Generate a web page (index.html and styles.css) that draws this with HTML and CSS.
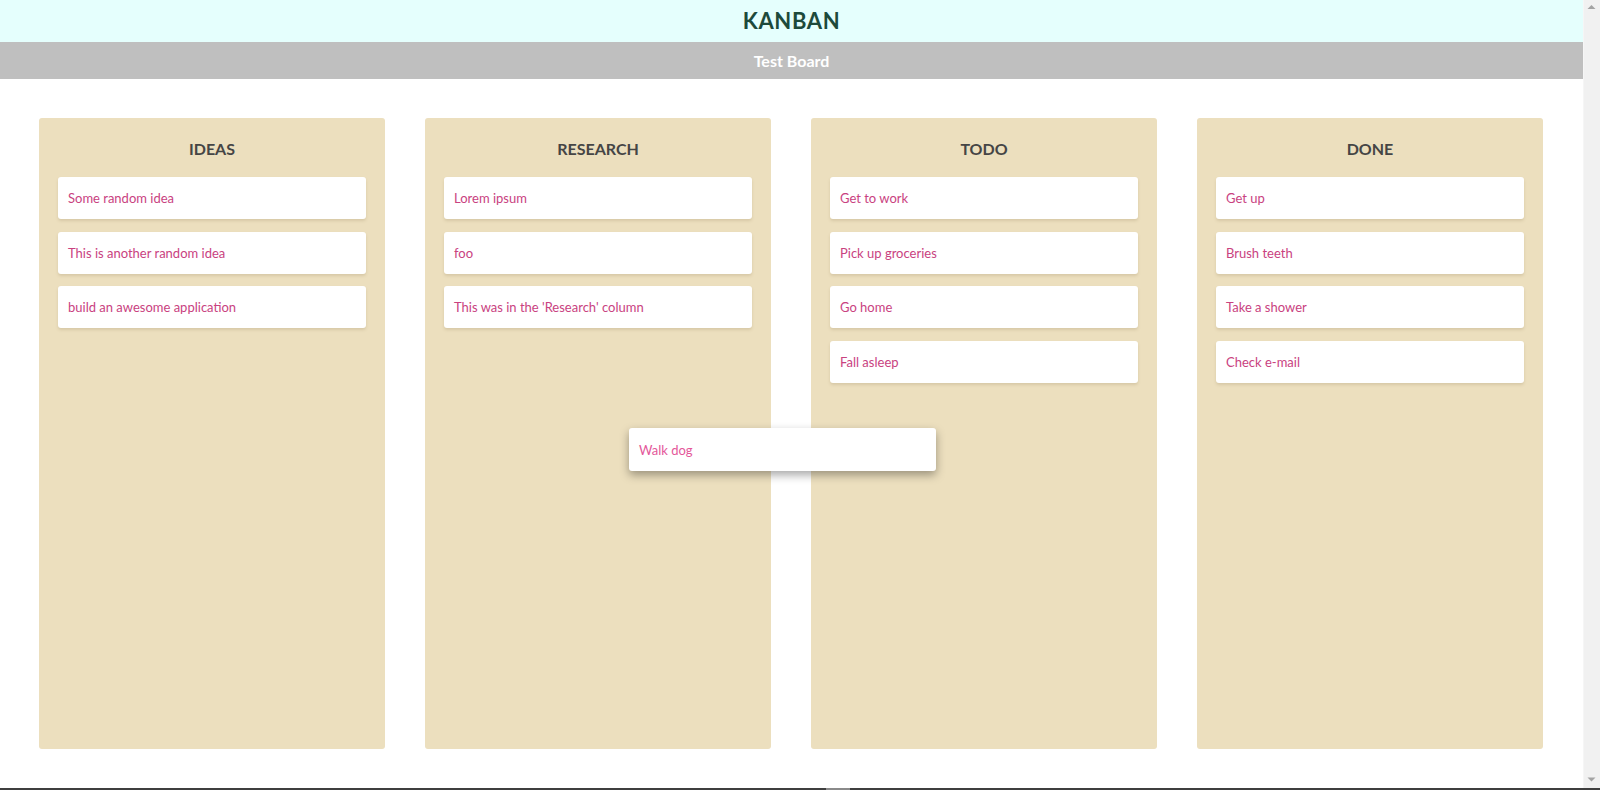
FILE: index.html
```html
<!DOCTYPE html>
<html lang="en">
<head>
<meta charset="utf-8">
<title>Kanban</title>
<link rel="stylesheet" href="styles.css">
</head>
<body>
<div class="page">
  <header class="app-header"><h1 class="app-title">KANBAN</h1></header>
  <div class="board-bar"><h2 class="board-name">Test Board</h2></div>
  <main class="board">
    <section class="column">
      <h3 class="column-title">IDEAS</h3>
      <div class="card">Some random idea</div>
      <div class="card">This is another random idea</div>
      <div class="card">build an awesome application</div>
    </section>
    <section class="column">
      <h3 class="column-title">RESEARCH</h3>
      <div class="card">Lorem ipsum</div>
      <div class="card">foo</div>
      <div class="card">This was in the 'Research' column</div>
    </section>
    <section class="column">
      <h3 class="column-title">TODO</h3>
      <div class="card">Get to work</div>
      <div class="card">Pick up groceries</div>
      <div class="card">Go home</div>
      <div class="card">Fall asleep</div>
    </section>
    <section class="column">
      <h3 class="column-title">DONE</h3>
      <div class="card">Get up</div>
      <div class="card">Brush teeth</div>
      <div class="card">Take a shower</div>
      <div class="card">Check e-mail</div>
    </section>
  </main>
  <div class="card card-dragging">Walk dog</div>
</div>
<aside class="scrollbar" aria-hidden="true">
  <svg class="scroll-arrow" width="17" height="17" viewBox="0 0 17 17"><polygon points="4.5,9 8.5,5 12.5,9" fill="#a3a3a3"/></svg>
  <svg class="scroll-arrow" width="17" height="17" viewBox="0 0 17 17"><polygon points="4.5,6.5 12.5,6.5 8.5,10.5" fill="#a3a3a3"/></svg>
</aside>
<div class="window-edge"><span class="window-edge-mark"></span></div>
</body>
</html>
```
FILE: styles.css
```css
body {
  margin: 0;
  font-family: "Lato", "Noto Sans", sans-serif;
  background: #ffffff;
  display: flex;
  height: 790px;
  overflow: hidden;
}
.page {
  flex: 1;
  position: relative;
  min-width: 0;
}
.scrollbar {
  width: 17px;
  height: 788px;
  box-sizing: border-box;
  background: #f1f1f1;
  border-left: 1px solid #f6f6f6;
  display: flex;
  flex-direction: column;
  justify-content: space-between;
}
.scroll-arrow {
  display: block;
  margin-left: -1px;
}
.app-header {
  height: 42px;
  background: #e5fffd;
  display: flex;
  align-items: center;
  justify-content: center;
}
.app-title {
  margin: 0;
  font-size: 22px;
  font-weight: 700;
  letter-spacing: 0.6px;
  color: #1d4a3b;
  line-height: 26px;
}
.board-bar {
  height: 37px;
  background: #bfbfbf;
  display: flex;
  align-items: center;
  justify-content: center;
}
.board-name {
  margin: 0;
  font-size: 16px;
  font-weight: 700;
  color: #ffffff;
  line-height: 20px;
}
.board {
  display: grid;
  grid-template-columns: repeat(4, 346px);
  column-gap: 40px;
  padding: 39px 39px 0 39px;
}
.column {
  height: 631px;
  box-sizing: border-box;
  background: #ecdfbe;
  border-radius: 3px;
  padding: 21px 19px;
}
.column-title {
  margin: 0 0 18px 0;
  text-align: center;
  font-size: 16px;
  font-weight: 700;
  line-height: 20px;
  color: #454545;
}
.card {
  height: 42px;
  box-sizing: border-box;
  background: #ffffff;
  border-radius: 3px;
  padding: 0 10px;
  display: flex;
  align-items: center;
  font-size: 13px;
  color: #c9427f;
  box-shadow: 0 2px 3px rgba(120, 100, 60, 0.18);
  margin-bottom: 12.7px;
}
.card-dragging {
  position: absolute;
  left: 629px;
  top: 428px;
  width: 307px;
  height: 43px;
  margin: 0;
  color: #e4579a;
  box-shadow: 0 4px 10px rgba(0, 0, 0, 0.35);
}
.window-edge {
  position: fixed;
  left: 0;
  right: 0;
  bottom: 0;
  height: 2px;
  background: #3f3f3f;
}
.window-edge-mark {
  position: absolute;
  left: 826px;
  width: 24px;
  top: 0;
  height: 2px;
  background: #8a8a8a;
}
```
